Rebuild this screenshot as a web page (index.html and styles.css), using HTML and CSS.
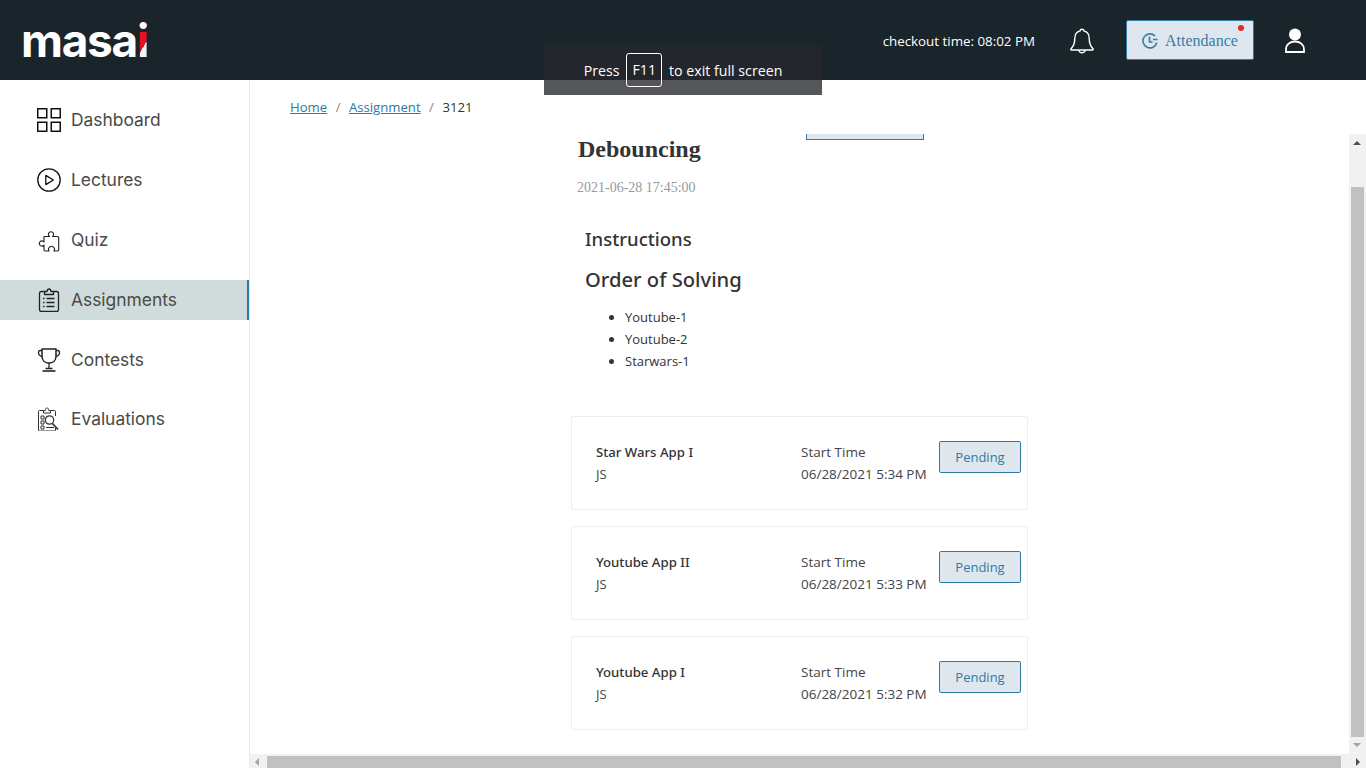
FILE: index.html
```html
<!DOCTYPE html>
<html lang="en">
<head>
    <meta charset="UTF-8">
    <meta name="viewport" content="width=device-width, initial-scale=1.0">
    <title>Debouncing - Assignment</title>
    <link rel="stylesheet" href="styles.css">
</head>
<body>
    <header class="topbar">
        <div class="logo">masa<span class="logo-i">i</span></div>
        <div class="topbar-right">
            <span class="checkout">checkout time: 08:02 PM</span>
            <svg class="bell" width="24" height="26" viewBox="0 0 24 26" fill="none" stroke="#fff" stroke-width="1.4" stroke-linejoin="round">
                <path d="M12 1.2c1 0 1.8.7 1.9 1.7 3.6.9 5.3 3.9 5.3 7.6 0 4.3.8 7.2 3.8 10.3.4.5.1 1.2-.6 1.2H1.6c-.7 0-1-.7-.6-1.2 3-3.1 3.8-6 3.8-10.3 0-3.7 1.7-6.7 5.3-7.6.1-1 .9-1.7 1.9-1.7z"/>
                <path d="M8.8 22c.3 1.7 1.6 2.8 3.2 2.8s2.9-1.1 3.2-2.8"/>
            </svg>
            <button class="attendance">
                <svg width="16" height="16" viewBox="0 0 16 16" fill="none" stroke="#3a7ca5" stroke-width="1.6">
                    <path d="M13 3A7 7 0 1 0 14.8 9.5"/>
                    <path d="M7.5 3.5V9h3M11 6.500h4.500"/>
                </svg>
                <span>Attendance</span>
                <i class="red-dot"></i>
            </button>
            <svg class="user" width="20" height="25" viewBox="0 0 20 25" fill="none" stroke="#fff" stroke-width="1.8">
                <circle cx="10" cy="6.5" r="6" fill="#fff" stroke="none"/>
                <path d="M1 24v-2.5C1 16.5 5 13.5 10 13.5s9 3 9 8V24z"/>
            </svg>
        </div>
    </header>

    <div class="fs-notice">Press <span class="key">F11</span> to exit full screen</div>

    <div class="layout">
        <nav class="sidebar">
            <a class="nav-item">
                <svg width="24" height="24" viewBox="0 0 24 24" fill="none" stroke="#111" stroke-width="1.5">
                    <rect x=".75" y=".75" width="9" height="9"/><rect x="14.25" y=".75" width="9" height="9"/>
                    <rect x=".75" y="14.25" width="9" height="9"/><rect x="14.25" y="14.25" width="9" height="9"/>
                </svg>
                <span>Dashboard</span>
            </a>
            <a class="nav-item">
                <svg width="24" height="24" viewBox="0 0 24 24" fill="none" stroke="#111" stroke-width="1.3" stroke-linejoin="round">
                    <circle cx="12" cy="12" r="11.2"/>
                    <path d="M8.8 7.4v9.2l7.6-4.600z"/>
                </svg>
                <span>Lectures</span>
            </a>
            <a class="nav-item">
                <svg width="24" height="24" viewBox="0 0 24 24" fill="none" stroke="#222" stroke-width="1.100" stroke-linejoin="round">
                    <path d="M7 8.500h5.500a2.600 2.600 0 1 1 3 0h5c.8 0 1.200.4 1.200 1.200v12.100c0 .8-.4 1.200-1.200 1.200h-3.500a3 3 0 1 0-5 0H8.200c-.8 0-1.200-.4-1.200-1.200v-4.800a2.600 2.600 0 1 1 0-3z"/>
                </svg>
                <span>Quiz</span>
            </a>
            <a class="nav-item active">
                <svg width="24" height="24" viewBox="0 0 24 24" fill="none" stroke="#222" stroke-width="1.300" stroke-linejoin="round">
                    <path d="M7.500 3.500H4.500c-1.300 0-2 .7-2 2v16c0 1.300.7 2 2 2h15c1.300 0 2-.7 2-2v-16c0-1.300-.7-2-2-2h-3"/>
                    <path d="M7.500 6.500V3.500h2.500C10.200 1.800 11 1 12 1s1.800.8 2 2.500h2.500v3z"/>
                    <path d="M9.500 10.500h8M9.500 14.500h8M9.500 18.500h8M6 10.500h1.500M6 14.500h1.500M6 18.500h1.500"/>
                </svg>
                <span>Assignments</span>
            </a>
            <a class="nav-item">
                <svg width="24" height="24" viewBox="0 0 24 24" fill="none" stroke="#222" stroke-width="1.300" stroke-linejoin="round">
                    <path d="M5 1h14v7.500c0 4-3 6.500-7 6.500s-7-2.500-7-6.500z" stroke-width="1.500"/>
                    <path d="M5 2.500H3.300C1.800 2.500 1.500 3.500 1.500 4.500c0 2 1.500 3.500 3.800 4M19 2.500h1.700c1.500 0 1.800 1 1.800 2 0 2-1.500 3.500-3.800 4"/>
                    <path d="M12 15v5.500M8.500 20.500h7"/>
                    <path d="M5.500 23h13" stroke-width="1.600"/>
                </svg>
                <span>Contests</span>
            </a>
            <a class="nav-item evaluations">
                <svg width="24" height="24" viewBox="0 0 24 24" fill="none" stroke="#333" stroke-width="1" stroke-linejoin="round">
                    <path d="M6.500 3.500H2.500c-.6 0-1 .4-1 1V23c0 .6.400 1 1 1h15c.6 0 1-.4 1-1v-2"/>
                    <path d="M13.500 3.500h4c.6 0 1 .4 1 1V9"/>
                    <path d="M6.500 6V3.500h1.800C8.600 1.600 9.200.8 10 .8s1.400.8 1.700 2.700h1.800V6z"/>
                    <rect x="4" y="9" width="3" height="3"/><rect x="4" y="14" width="3" height="3"/><rect x="4" y="19" width="3" height="3"/>
                    <circle cx="12.500" cy="13" r="4.200" stroke-width="1.200"/>
                    <path d="M15.500 16.500l5.500 6" stroke-width="1.800"/>
                    <path d="M9 20.500h8" />
                </svg>
                <span>Evaluations</span>
            </a>
        </nav>

        <main class="main">
            <div class="breadcrumb">
                <a href="#">Home</a><span class="sep">/</span><a href="#">Assignment</a><span class="sep">/</span><span>3121</span>
            </div>

            <div class="scroll-row">
                <div class="content">
                    <div class="cut-btn"></div>
                    <h2 class="title">Debouncing</h2>
                    <div class="date">2021-06-28 17:45:00</div>

                    <div class="instructions">
                        <h3>Instructions</h3>
                        <h3 class="order">Order of Solving</h3>
                        <ul>
                            <li>Youtube-1</li>
                            <li>Youtube-2</li>
                            <li>Starwars-1</li>
                        </ul>
                    </div>

                    <div class="card">
                        <div class="card-name"><strong>Star Wars App I</strong><span>JS</span></div>
                        <div class="card-time"><span>Start Time</span><span>06/28/2021 5:34 PM</span></div>
                        <button class="pending">Pending</button>
                    </div>
                    <div class="card">
                        <div class="card-name"><strong>Youtube App II</strong><span>JS</span></div>
                        <div class="card-time"><span>Start Time</span><span>06/28/2021 5:33 PM</span></div>
                        <button class="pending">Pending</button>
                    </div>
                    <div class="card">
                        <div class="card-name"><strong>Youtube App I</strong><span>JS</span></div>
                        <div class="card-time"><span>Start Time</span><span>06/28/2021 5:32 PM</span></div>
                        <button class="pending">Pending</button>
                    </div>
                </div>

                <div class="vbar">
                    <span class="arrow-up"></span>
                    <div class="vthumb"></div>
                    <span class="arrow-down"></span>
                </div>
            </div>

            <div class="hbar">
                <span class="arrow-left"></span>
                <div class="hthumb"></div>
                <span class="arrow-right"></span>
            </div>
        </main>
    </div>
</body>
</html>
```

FILE: styles.css
```css
* {
    box-sizing: border-box;
}

body {
    font-family: 'Open Sans', 'Noto Sans', sans-serif;
    background-color: #fff;
    margin: 0;
    padding: 0;
    height: 768px;
    overflow: hidden;
    color: #333;
}

.topbar {
    height: 80px;
    background-color: #1a242b;
    display: flex;
    align-items: center;
    justify-content: space-between;
    padding: 0 61px 0 21px;
}

.logo {
    font-family: 'Inter', sans-serif;
    font-weight: 650;
    font-size: 46px;
    line-height: 80px;
    letter-spacing: -1.3px;
    color: #fff;
    height: 80px;
}

.logo-i {
    color: transparent;
    background-image: linear-gradient(#fff, #fff), linear-gradient(120deg, #e1141f 0 23px, #f2f2f2 23px);
    background-size: 100% 20px, 100% 100%;
    background-repeat: no-repeat;
    -webkit-background-clip: text;
    background-clip: text;
}

.topbar-right {
    display: flex;
    align-items: center;
}

.checkout {
    color: #fff;
    font-size: 13.35px;
    margin-right: 35px;
    padding-top: 2px;
}

.bell {
    margin-right: 32px;
    margin-top: 2px;
}

.attendance {
    position: relative;
    width: 128px;
    height: 40px;
    display: flex;
    align-items: center;
    gap: 7px;
    padding: 2px 0 0 15px;
    background-color: #dfe7ee;
    border: 1px solid #2f7ba6;
    border-radius: 2px;
    color: #3a7ca5;
    font-family: 'Liberation Serif', serif;
    font-size: 16px;
}

.red-dot {
    position: absolute;
    top: 4px;
    right: 9px;
    width: 6px;
    height: 6px;
    border-radius: 50%;
    background-color: #e02b2b;
}

.user {
    margin-left: 31px;
}

.fs-notice {
    position: absolute;
    top: 45px;
    left: 544px;
    width: 278px;
    height: 50px;
    display: flex;
    align-items: center;
    justify-content: center;
    background-color: rgba(38, 41, 46, 0.79);
    color: #fff;
    font-size: 14.2px;
}

.key {
    margin: 0 7px;
    padding: 0 5px;
    height: 34px;
    line-height: 32px;
    border: 1px solid #fff;
    border-radius: 3px;
}

.layout {
    display: flex;
    height: 688px;
}

.sidebar {
    width: 250px;
    flex-shrink: 0;
    padding-top: 20px;
    border-right: 1px solid #e8ebf0;
}

.nav-item {
    display: flex;
    align-items: center;
    height: 40px;
    margin-bottom: 20px;
    padding-left: 37px;
    gap: 10px;
    font-family: 'Inter', sans-serif;
    font-size: 17.4px;
    color: #4a4a4a;
}

.nav-item span {
    margin-bottom: 2px;
}

.nav-item.active {
    background-color: #d0dcdc;
    border-right: 2px solid #2a7aa5;
}

.evaluations {
    position: relative;
    top: -1px;
}

.main {
    flex: 1;
    min-width: 0;
    display: flex;
    flex-direction: column;
}

.breadcrumb {
    height: 54px;
    padding: 18px 0 0 40px;
    font-size: 13.15px;
    line-height: 18px;
}

.breadcrumb a {
    color: #2a7aa5;
}

.sep {
    margin: 0 8.5px;
    color: #888;
}

.scroll-row {
    flex: 1;
    min-height: 0;
    display: flex;
}

.content {
    flex: 1;
    padding-left: 321px;
    overflow: hidden;
}

.cut-btn {
    width: 118px;
    height: 6px;
    margin-left: 235px;
    background-color: #dfe7ee;
    border: 1px solid #2f7ba6;
    border-top: none;
}

.title {
    margin: 0 0 0 7px;
    font-family: 'Liberation Serif', serif;
    font-size: 24px;
    line-height: 18px;
    font-weight: bold;
    color: #333;
}

.date {
    margin: 20px 0 0 6px;
    font-family: 'Liberation Serif', serif;
    font-size: 14px;
    line-height: 20px;
    color: #999;
}

.instructions {
    padding: 28px 0 0 14px;
    width: 457px;
}

.instructions h3 {
    margin: 0;
    font-family: 'Noto Sans', sans-serif;
    font-size: 18.5px;
    line-height: 26px;
    font-weight: 500;
    color: #333;
}

.instructions .order {
    margin-top: 14px;
    font-size: 20.2px;
}

.instructions ul {
    margin: 14px 0 0;
    padding-left: 40px;
    font-size: 13px;
    line-height: 22px;
}

.card {
    width: 457px;
    height: 94px;
    margin-bottom: 16px;
    display: flex;
    align-items: flex-start;
    padding: 24px 6px 0 24px;
    border: 1px solid #eee;
    border-radius: 2px;
    font-size: 13.5px;
    line-height: 22px;
    color: #444;
}

.instructions + .card {
    margin-top: 44px;
}

.card-name {
    width: 205px;
    flex-shrink: 0;
    display: flex;
    flex-direction: column;
}

.card-name strong {
    font-family: 'Noto Sans', sans-serif;
    font-size: 13.2px;
    font-weight: 500;
    color: #333;
}

.card-name span {
    font-size: 13px;
}

.card-time {
    flex: 1;
    display: flex;
    flex-direction: column;
}

.pending {
    width: 82px;
    height: 32px;
    background-color: #dfe7ee;
    border: 1px solid #2f7ba6;
    border-radius: 2px;
    color: #2f7ba6;
    font-family: 'Open Sans', sans-serif;
    font-size: 13px;
}

.vbar {
    width: 17px;
    flex-shrink: 0;
    background-color: #f1f1f1;
    display: flex;
    flex-direction: column;
    align-items: flex-start;
}

.vthumb {
    width: 13px;
    height: 550px;
    margin-left: 2px;
    background-color: #c1c1c1;
}

.arrow-up, .arrow-down {
    width: 0;
    height: 0;
    margin: 7px 0 0 4px;
    border-left: 4px solid transparent;
    border-right: 4px solid transparent;
}

.arrow-up {
    margin-bottom: 42px;
    border-bottom: 4px solid #505050;
}

.arrow-down {
    margin-top: 6px;
    border-top: 4px solid #a3a3a3;
}

.hbar {
    height: 14px;
    flex-shrink: 0;
    background-color: #f1f1f1;
    display: flex;
    align-items: flex-end;
}

.hthumb {
    width: 1074px;
    height: 12px;
    margin-left: 8px;
    background-color: #c1c1c1;
}

.arrow-left, .arrow-right {
    width: 0;
    height: 0;
    margin-bottom: 2px;
    border-top: 4px solid transparent;
    border-bottom: 4px solid transparent;
}

.arrow-left {
    margin-left: 5px;
    border-right: 4px solid #a3a3a3;
}

.arrow-right {
    margin-left: 15px;
    border-left: 4px solid #505050;
}
```
